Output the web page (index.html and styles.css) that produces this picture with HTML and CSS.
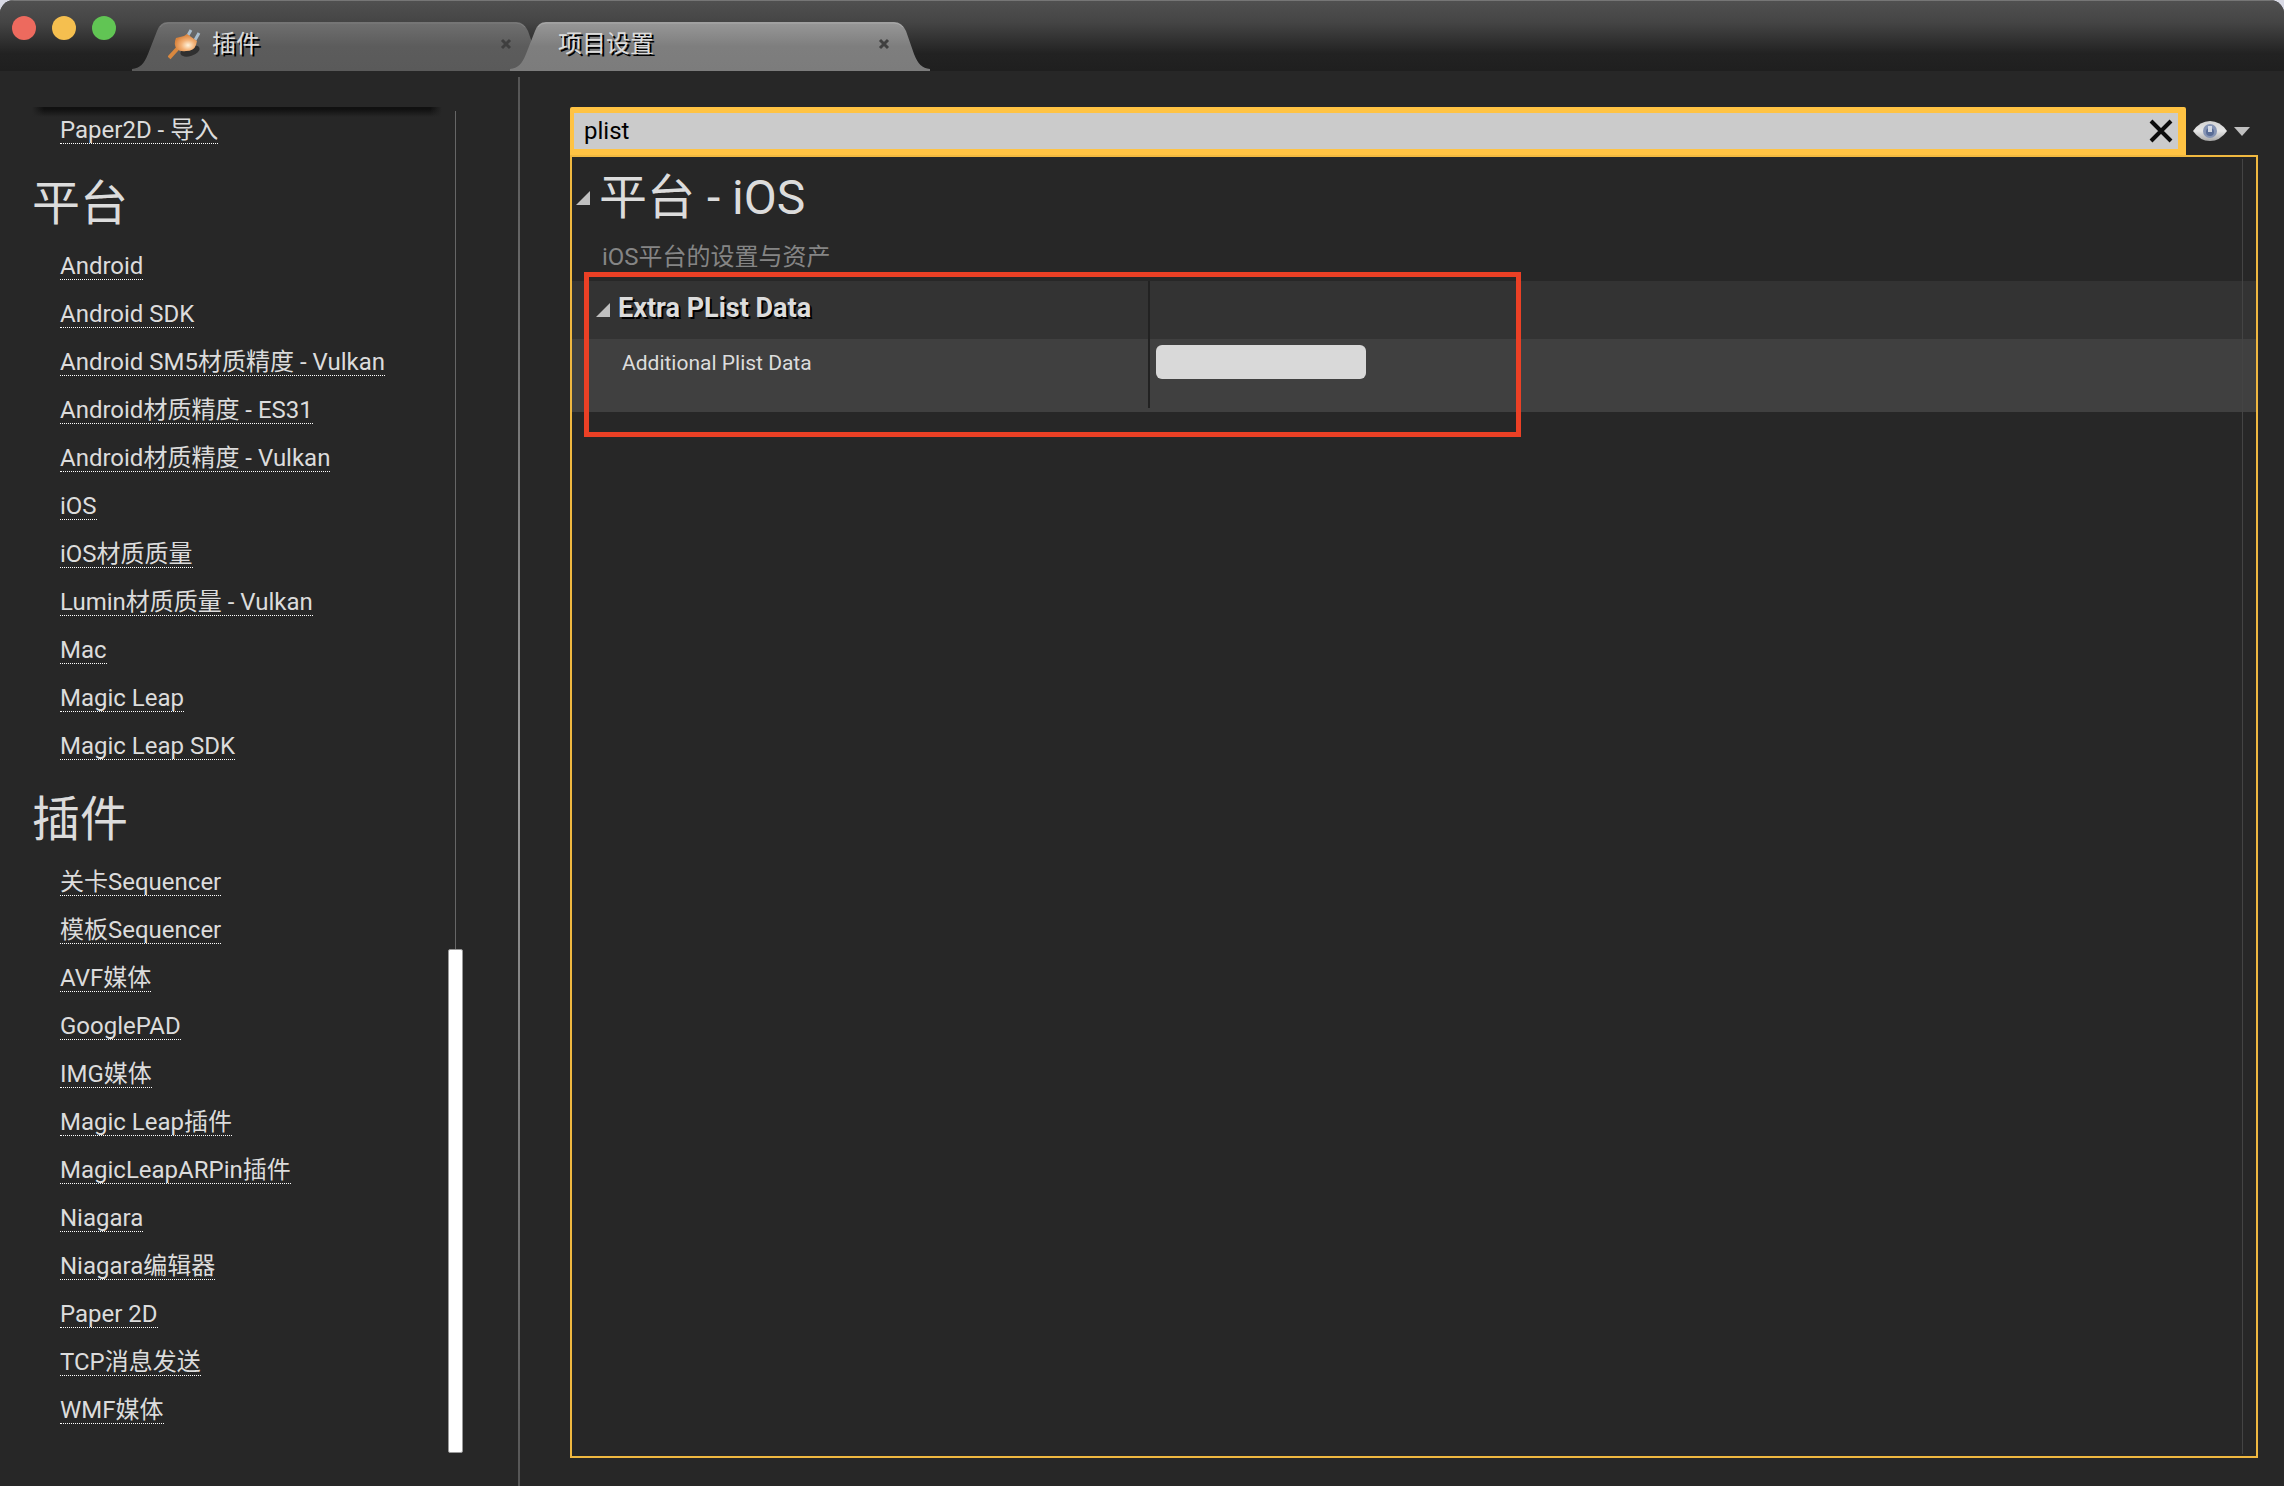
FILE: index.html
```html
<!DOCTYPE html>
<html lang="zh-CN">
<head>
    <meta charset="UTF-8">
    <meta name="viewport" content="width=device-width, initial-scale=1.0">
    <title>项目设置</title>

    <link rel="stylesheet" href="styles.css">
</head>
<body>
    <div class="window">
        <header class="titlebar">
            <div class="lights">
                <button class="light red" aria-label="关闭"></button>
                <button class="light yellow" aria-label="最小化"></button>
                <button class="light green" aria-label="缩放"></button>
            </div>

            <div class="tabs">
                <div class="tab">
                    <svg class="tab-shape" viewBox="0 0 420 49">
                        <defs>
                            <linearGradient id="tabDark" x1="0" y1="0" x2="0" y2="1">
                                <stop offset="0" stop-color="#707070"/>
                                <stop offset="0.5" stop-color="#5c5c5c"/>
                                <stop offset="1" stop-color="#5a5a5a"/>
                            </linearGradient>
                        </defs>
                        <path fill="url(#tabDark)" d="M0 49V47C8 46 12 42 16 32L25 9Q28 0 36 0H384Q392 0 396 9L404 32C408 42 412 46 420 47V49Z"/>
                        <path fill="none" stroke="#7d7d7d" d="M28 5Q31 1 36 1H384Q389 1 393 5"/>
                    </svg>
                    <button class="tab-title">
                        <svg class="plug" viewBox="0 0 34 32">
                            <defs>
                                <radialGradient id="plugFill" cx="0.6" cy="0.65" r="0.6">
                                    <stop offset="0" stop-color="#fff3dc"/>
                                    <stop offset="0.5" stop-color="#f3b176"/>
                                    <stop offset="1" stop-color="#d9833d"/>
                                </radialGradient>
                            </defs>
                            <ellipse cx="22" cy="23" rx="10" ry="5" fill="#222" opacity="0.75" transform="rotate(-18 22 23)"/>
                            <path d="M19 9L23 2M27 12L31 5" stroke="#a9bccb" stroke-width="3"/>
                            <path d="M1 30L10 20" stroke="#d9883f" stroke-width="4"/>
                            <path d="M8 10L16 8L19 6L29 13L28 17Q26 23 18 23Q12 24 9 21Q5 17 8 10Z" fill="url(#plugFill)"/>
                        </svg>
                        插件
                    </button>
                    <button class="tab-close" aria-label="关闭标签页">
                        <svg viewBox="0 0 12 12"><path d="M2 2L10 10M10 2L2 10"/></svg>
                    </button>
                </div>

                <div class="tab active">
                    <svg class="tab-shape" viewBox="0 0 420 49">
                        <defs>
                            <linearGradient id="tabLight" x1="0" y1="0" x2="0" y2="1">
                                <stop offset="0" stop-color="#989898"/>
                                <stop offset="0.5" stop-color="#7e7e7e"/>
                                <stop offset="1" stop-color="#7c7c7c"/>
                            </linearGradient>
                        </defs>
                        <path fill="url(#tabLight)" d="M0 49V47C8 46 12 42 16 32L25 9Q28 0 36 0H384Q392 0 396 9L404 32C408 42 412 46 420 47V49Z"/>
                        <path fill="none" stroke="#aaa" d="M28 5Q31 1 36 1H384Q389 1 393 5"/>
                    </svg>
                    <button class="tab-title">项目设置</button>
                    <button class="tab-close" aria-label="关闭标签页">
                        <svg viewBox="0 0 12 12"><path d="M2 2L10 10M10 2L2 10"/></svg>
                    </button>
                </div>
            </div>
        </header>

        <div class="content">
            <nav class="sidebar">
                <div class="sections">
                    <ul>
                        <li><a href="#">Paper2D - 导入</a></li>
                    </ul>

                    <h2>平台</h2>
                    <ul>
                        <li><a href="#">Android</a></li>
                        <li><a href="#">Android SDK</a></li>
                        <li><a href="#">Android SM5材质精度 - Vulkan</a></li>
                        <li><a href="#">Android材质精度 - ES31</a></li>
                        <li><a href="#">Android材质精度 - Vulkan</a></li>
                        <li><a href="#">iOS</a></li>
                        <li><a href="#">iOS材质质量</a></li>
                        <li><a href="#">Lumin材质质量 - Vulkan</a></li>
                        <li><a href="#">Mac</a></li>
                        <li><a href="#">Magic Leap</a></li>
                        <li><a href="#">Magic Leap SDK</a></li>
                    </ul>

                    <h2>插件</h2>
                    <ul>
                        <li><a href="#">关卡Sequencer</a></li>
                        <li><a href="#">模板Sequencer</a></li>
                        <li><a href="#">AVF媒体</a></li>
                        <li><a href="#">GooglePAD</a></li>
                        <li><a href="#">IMG媒体</a></li>
                        <li><a href="#">Magic Leap插件</a></li>
                        <li><a href="#">MagicLeapARPin插件</a></li>
                        <li><a href="#">Niagara</a></li>
                        <li><a href="#">Niagara编辑器</a></li>
                        <li><a href="#">Paper 2D</a></li>
                        <li><a href="#">TCP消息发送</a></li>
                        <li><a href="#">WMF媒体</a></li>
                    </ul>
                </div>

                <div class="scrollbar">
                    <div class="track"></div>
                    <div class="thumb"></div>
                </div>
            </nav>

            <div class="splitter"></div>

            <main class="details">
                <div class="toolbar">
                    <div class="search">
                        <input type="text" value="plist" aria-label="搜索" spellcheck="false">
                        <button class="clear" aria-label="清除">
                            <svg viewBox="0 0 24 24"><path d="M2 2L22 22M22 2L2 22"/></svg>
                        </button>
                    </div>
                    <button class="view" aria-label="视图选项">
                        <svg class="eye" viewBox="0 0 36 20">
                            <defs>
                                <linearGradient id="eyeWhite" x1="0" y1="0" x2="0" y2="1">
                                    <stop offset="0" stop-color="#d2d2d2"/>
                                    <stop offset="0.5" stop-color="#e6e6e6"/>
                                    <stop offset="1" stop-color="#a8a8a8"/>
                                </linearGradient>
                            </defs>
                            <path d="M1 10Q8 0 18 0Q28 0 35 10Q28 20 18 20Q8 20 1 10Z" fill="url(#eyeWhite)"/>
                            <circle cx="18" cy="10" r="7" fill="#8594b4"/>
                            <circle cx="18" cy="11" r="4" fill="#5a6d96"/>
                            <path d="M16 5H20V11H16Z" fill="#d5dae5"/>
                        </svg>
                        <svg class="caret" viewBox="0 0 16 9"><path d="M0 0H16L8 9Z"/></svg>
                    </button>
                </div>

                <section class="panel">
                    <div class="panel-head">
                        <button class="arrow" aria-label="折叠"><svg viewBox="0 0 14 14"><path d="M14 0V14H0Z"/></svg></button>
                        <h1>平台 - iOS</h1>
                    </div>
                    <p class="hint">iOS平台的设置与资产</p>

                    <div class="group">
                        <div class="row category">
                            <div class="name">
                                <button class="arrow" aria-label="折叠"><svg viewBox="0 0 14 14"><path d="M14 0V14H0Z"/></svg></button>
                                <h3>Extra PList Data</h3>
                            </div>
                            <div class="value"></div>
                        </div>
                        <div class="row property">
                            <div class="name"><label for="plistData">Additional Plist Data</label></div>
                            <div class="value"><input type="text" id="plistData"></div>
                        </div>
                        <div class="marker"></div>
                    </div>

                    <div class="panel-track"></div>
                </section>
            </main>
        </div>
    </div>
</body>
</html>
```
FILE: styles.css
```css
*{
    margin: 0;
    padding: 0;
    font-family: Roboto, 'Noto Sans CJK SC', sans-serif;
    box-sizing: border-box;
}

body{
    background-color: #d8d9e4;
}

button{
    border: 0;
    outline: 0;
    background: none;
    color: inherit;
    cursor: pointer;
}

svg{
    display: block;
}

.window{
    display: flex;
    flex-direction: column;
    height: 100vh;
    background: #272727;
    color: #dcdcdc;
    font-size: 24px;
    border-radius: 14px 14px 0 0;
    overflow: hidden;
}

/* title bar */

.titlebar{
    display: flex;
    align-items: flex-end;
    height: 71px;
    background: linear-gradient(#505050, #454545 30%, #222 75%, #1f1f1f);
    border-top: 1px solid #767676;
}

.lights{
    display: flex;
    gap: 16px;
    width: 132px;
    padding: 0 0 31px 12px;
}

.light{
    width: 24px;
    height: 24px;
    border-radius: 50%;
}

.red{
    background: #ed6a5e;
}

.yellow{
    background: #f5bf4f;
}

.green{
    background: #61c554;
}

.tabs{
    display: flex;
}

.tab{
    position: relative;
    display: flex;
    align-items: center;
    justify-content: space-between;
    width: 420px;
    height: 49px;
    margin-right: -42px;
    padding: 0 40px 5px 36px;
}

.tab.active{
    padding-left: 48px;
}

.tab-shape{
    position: absolute;
    left: 0;
    top: 0;
    width: 420px;
    height: 49px;
}

.tab-title{
    position: relative;
    display: flex;
    align-items: center;
    gap: 10px;
    font-size: 24px;
    line-height: 36px;
    text-shadow: 2px 2px 0 #000;
}

.plug{
    width: 34px;
    height: 32px;
}

.tab-close{
    position: relative;
    width: 12px;
    height: 12px;
}

.tab-close path{
    fill: none;
    stroke: #3f3f3f;
    stroke-width: 3;
}

/* left column */

.content{
    display: flex;
    flex: 1;
    min-height: 0;
}

.sidebar{
    position: relative;
    display: flex;
    justify-content: space-between;
    width: 518px;
    padding: 36px 55px 33px 32px;
}

.sidebar::before{
    content: "";
    position: absolute;
    left: 32px;
    top: 36px;
    width: 410px;
    height: 10px;
    background: linear-gradient(to right, #272727, transparent 12px, transparent 398px, #272727), linear-gradient(#101010 20%, #272727);
}

.sections h2{
    font-size: 48px;
    font-weight: 400;
    line-height: 72px;
    padding: 13px 0 3px;
}

.sections ul{
    list-style: none;
    padding-left: 28px;
}

.sections li{
    display: flex;
    align-items: center;
    height: 48px;
}

.sections a{
    position: relative;
    color: #dcdcdc;
    line-height: 25px;
    text-decoration: none;
    border-bottom: 1px dotted #fff;
}

.scrollbar{
    display: flex;
    flex-direction: column;
    align-items: center;
    width: 15px;
    padding-top: 4px;
}

.track{
    flex: 5;
    width: 1px;
    background: #666;
}

.thumb{
    flex: 3;
    width: 15px;
    background: #fff;
    border: 1px solid #999;
    border-radius: 2px;
}

.splitter{
    width: 2px;
    margin-top: 6px;
    background: linear-gradient(#555, #999 50%, #555);
}

/* right column */

.details{
    display: flex;
    flex-direction: column;
    flex: 1;
    padding: 36px 26px 28px 50px;
}

.toolbar{
    display: flex;
    height: 48px;
}

.search{
    display: flex;
    align-items: center;
    flex: 1;
    background: #cbcbcb;
    border: solid #ffc343;
    border-width: 6px 8px 6px 4px;
    border-radius: 2px 2px 0 0;
    padding: 0 5px 0 10px;
}

.search input{
    flex: 1;
    border: 0;
    outline: 0;
    background: none;
    color: #000;
    font-size: 24px;
}

.clear{
    width: 24px;
    height: 24px;
}

.clear path{
    fill: none;
    stroke: #0c0c0c;
    stroke-width: 4;
}

.view{
    display: flex;
    align-items: center;
    gap: 6px;
    width: 72px;
    padding: 0 0 0 6px;
}

.eye{
    width: 36px;
    height: 20px;
}

.caret{
    width: 16px;
    height: 9px;
}

.caret path, .arrow path{
    fill: #c0c0c0;
}

.panel{
    position: relative;
    flex: 1;
    border: 2px solid #f0b840;
}

.panel-head{
    display: flex;
    align-items: center;
    gap: 9px;
    padding: 5px 0 0 4px;
}

.arrow{
    width: 14px;
    height: 14px;
}

h1{
    font-size: 48px;
    font-weight: 400;
    line-height: 72px;
}

.hint{
    color: #858585;
    line-height: 36px;
    padding: 5px 0 6px 30px;
}

.group{
    position: relative;
}

.row{
    display: flex;
}

.category{
    height: 58px;
    background: #333;
}

.property{
    height: 73px;
    background: #404040;
}

.name{
    display: flex;
    width: 34.3%;
    border-right: 2px solid #222;
}

.category .name{
    align-items: center;
    gap: 8px;
    padding-left: 24px;
}

.property .name{
    height: 69px;
    padding-left: 50px;
}

h3{
    font-size: 27px;
    font-weight: 700;
    line-height: 32px;
    padding-bottom: 5px;
    text-shadow: 2px 2px 0 #000;
}

label{
    font-size: 21px;
    line-height: 48px;
}

.value{
    padding: 6px;
}

.value input{
    display: block;
    width: 210px;
    height: 34px;
    border: 0;
    outline: 0;
    border-radius: 6px;
    background: #d9d9d9;
    padding: 0 8px;
    font-size: 21px;
}

/* red frame drawn over the group */
.marker{
    position: absolute;
    left: 12px;
    top: -9px;
    width: 937px;
    height: 165px;
    border: 5px solid #eb4025;
}

.panel-track{
    position: absolute;
    right: 13px;
    top: 2px;
    bottom: 2px;
    width: 1px;
    background: #444;
}
```
